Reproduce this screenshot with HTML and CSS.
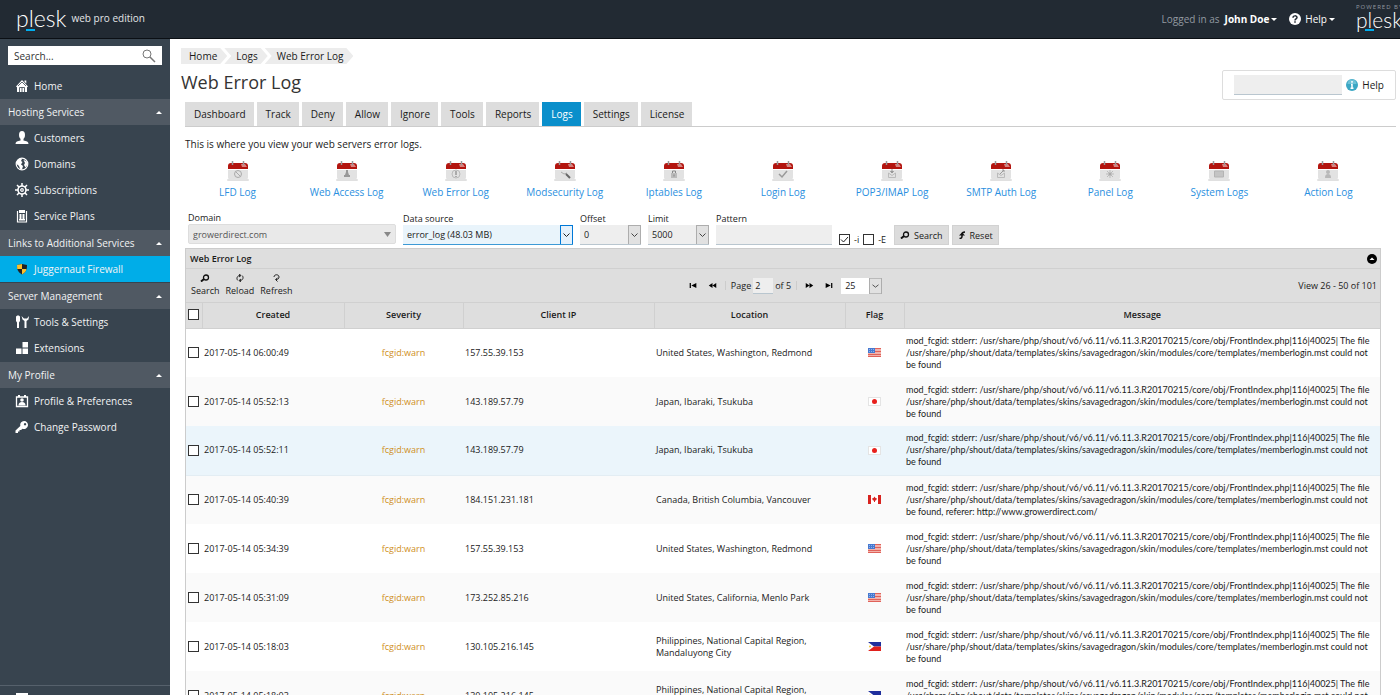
FILE: index.html
```html
<!DOCTYPE html>
<html lang="en">
<head>
    <meta charset="UTF-8">
    <meta name="viewport" content="width=device-width, initial-scale=1.0">
    <title>Web Error Log</title>
    <link rel="stylesheet" href="styles.css">
</head>
<body>

<!-- Shared icons -->
<svg class="sprite" aria-hidden="true">
    <symbol id="calendar" viewBox="0 0 22 20">
        <rect x="0" y="18" width="22" height="2" rx="1" fill="#ccc" opacity=".6"/>
        <path d="M1 7h20v9a3 3 0 0 1-3 3H4a3 3 0 0 1-3-3z" fill="#e2e2e2"/>
        <path d="M1 8V5a3 3 0 0 1 3-3h14a3 3 0 0 1 3 3v3z" fill="#b3150f"/>
        <path d="M14 3h4l2 3h-5z" fill="#d9837f"/>
        <path d="M5.500 0v4M16.500 0v4" stroke="#999" stroke-width="1.500"/>
        <path d="M1 8.500h20" stroke="#fff"/>
    </symbol>
    <symbol id="glass" viewBox="0 0 10 8">
        <circle cx="6" cy="3.500" r="2.500" fill="none" stroke="#111" stroke-width="1.300"/>
        <path d="M4 5L1 7.500" stroke="#111" stroke-width="2"/>
    </symbol>
    <symbol id="flag-us" viewBox="0 0 13 9">
        <rect width="13" height="9" fill="#f3b3ac"/>
        <path d="M0 .5h13M0 3.500h13M0 6.500h13M0 8.500h13" stroke="#e0625a"/>
        <rect width="7" height="5" fill="#4779d0"/>
        <path d="M1 1.500h5M1 3.500h5" stroke="#8fb1ea" stroke-dasharray="1 1"/>
    </symbol>
    <symbol id="flag-jp" viewBox="0 0 13 9">
        <rect x=".5" y=".5" width="12" height="8" fill="#fff" stroke="#e4e4e4"/>
        <circle cx="6.500" cy="4.500" r="2.500" fill="#e8201c"/>
    </symbol>
    <symbol id="flag-ca" viewBox="0 0 13 9">
        <rect width="13" height="9" fill="#fff"/>
        <path d="M0 0h3v9H0zM10 0h3v9h-3z" fill="#d8231f"/>
        <path d="M6.500 1.500l1 1.500 1.500.5-1 2H7v1.500H6V5.500H5l-1-2L5.500 3z" fill="#d8231f"/>
    </symbol>
    <symbol id="flag-ph" viewBox="0 0 13 9">
        <path d="M0 0h13v4.500H0z" fill="#1f2f9c"/>
        <path d="M0 4.500h13V9H0z" fill="#e0201c"/>
        <path d="M0 0l6 4.500L0 9z" fill="#fff"/>
        <circle cx="2" cy="4.500" r="1" fill="#f2c53a"/>
    </symbol>
</svg>

<header class="topbar">
    <a class="logo" href="#">p<span class="logo-l">l</span>esk</a>
    <span class="edition">web pro edition</span>
    <div class="topbar-right">
        <span class="logged">Logged in as</span>
        <a class="user" href="#">John Doe<i class="caret"></i></a>
        <a class="help" href="#">
            <svg width="12" height="12" viewBox="0 0 12 12"><circle cx="6" cy="6" r="6" fill="#fff"/><path d="M4 4.700C4 2.300 8 2.300 8 4.500 8 6 6 5.800 6 7.400M6 8.300v1.500" fill="none" stroke="#222a33" stroke-width="1.500"/></svg>
            Help<i class="caret"></i>
        </a>
        <div class="powered">
            <small>POWERED BY</small>
            <a class="logo" href="#">p<span class="logo-l">l</span>esk</a>
        </div>
    </div>
</header>

<div class="page">
    <aside class="sidebar">
        <form class="side-search">
            <input type="text" aria-label="Search" value="Search...">
            <svg width="14" height="14" viewBox="0 0 14 14" fill="none" stroke="#777"><circle cx="5" cy="5" r="4"/><path d="M8 8l5 5" stroke-width="1.500"/></svg>
        </form>
        <nav>
            <ul>
                <li><a href="#"><svg class="ico" viewBox="0 0 14 14"><path d="M7 1l6 6.500-1 .8V13H2V8.300l-1-.8zM9.500 1.500h1.800v3L9.500 2.800z"/><path d="M4.500 13V8.500h5V13M7 8.500V13M3 7l4-4 4 4" fill="none" stroke="#38444f" stroke-width=".8"/></svg>Home</a></li>
            </ul>
            <h2>Hosting Services<i class="up"></i></h2>
            <ul>
                <li><a href="#"><svg class="ico" viewBox="0 0 14 14"><ellipse cx="7" cy="4" rx="3" ry="4"/><path d="M5.500 6h3v3.500c3 .5 5 1 5 3.500H.5c0-2.500 2-3 5-3.500z"/></svg>Customers</a></li>
                <li><a href="#"><svg class="ico" viewBox="0 0 14 14"><circle cx="7" cy="7" r="5.800" fill="none" stroke="#fff" stroke-width="1.200"/><path d="M2 4c1.500-2 3-2.500 5-2l-1 2 1.500 1L6 7.500 8 9l-1 3.500C4 12 5 10 3.500 8.500L1.500 7zM8.500 3l3 1 1 3.500-2 3L9 8l1-2z"/></svg>Domains</a></li>
                <li><a href="#"><svg class="ico" viewBox="0 0 14 14"><g fill="none" stroke="#fff"><circle cx="7" cy="7" r="4" stroke-width="1.600"/><circle cx="7" cy="7" r="1.300" stroke-width="1.200"/><path d="M7 0v3M7 11v3M0 7h3M11 7h3M2 2l2.200 2.200M9.800 9.800L12 12M12 2L9.800 4.200M4.200 9.800L2 12" stroke-width="1.500"/></g></svg>Subscriptions</a></li>
                <li><a href="#"><svg class="ico" viewBox="0 0 14 14"><path d="M2.500 2v11h9V2" fill="none" stroke="#fff" stroke-width="1.200"/><path d="M4 1h6v3H4zM4.500 5h2v6h-2zM7.500 5h2v6h-2zM4 10h6v1.500H4z"/></svg>Service Plans</a></li>
            </ul>
            <h2>Links to Additional Services<i class="up"></i></h2>
            <ul>
                <li><a class="active" href="#"><svg class="ico" viewBox="0 0 14 14"><path d="M7 2l5 1c0 5-1 7-5 9.500C3 10 2 8 2 3z" fill="#222"/><path d="M7 2v5H2.200L2 3zM7 7h4.500c-.5 2.500-2 4-4.500 5.500z" fill="#fbc02d"/></svg>Juggernaut Firewall</a></li>
            </ul>
            <h2>Server Management<i class="up"></i></h2>
            <ul>
                <li><a href="#"><svg class="ico" viewBox="0 0 14 14"><path d="M1 2c0-2 4-2 4 0v4L4 7.500V13H2V7.500L1 6zM6.500 1l1 3.500L9.500 6v7h2V6l2-1.500.5-3.500-2 2.500H9z"/></svg>Tools &amp; Settings</a></li>
                <li><a href="#"><svg class="ico" viewBox="0 0 14 14"><path d="M7.500 1H13v5.500H7.500zM7.500 7.500H13V13H7.500zM1 7.500h5.500V13H1z"/></svg>Extensions</a></li>
            </ul>
            <h2>My Profile<i class="up"></i></h2>
            <ul>
                <li><a href="#"><svg class="ico" viewBox="0 0 14 14"><path d="M1.500 3h11v9.500h-11z" fill="none" stroke="#fff" stroke-width="1.300"/><path d="M3 1h2v2H3zM9 1h2v2H9z"/><circle cx="7" cy="6" r="1.800"/><path d="M3.500 11.500c0-2 1-3.500 3.500-3.500s3.500 1.500 3.500 3.500z"/></svg>Profile &amp; Preferences</a></li>
                <li><a href="#"><svg class="ico" viewBox="0 0 14 14"><path fill-rule="evenodd" d="M9 1a4 4 0 1 1-1.500 7.700L6 10H4.500v1.500H3V13H.5v-2.500L5.300 6A4 4 0 0 1 9 1zm1 2a1.200 1.200 0 1 0 .1 0z"/></svg>Change Password</a></li>
            </ul>
        </nav>
        <div class="side-foot">
            <svg class="ico" viewBox="0 0 14 14"><path d="M1 0h12v14H1z"/></svg>
        </div>
    </aside>

    <main class="content">
        <div class="page-head">
            <div>
                <nav class="crumbs">
                    <a href="#">Home</a>
                    <a href="#">Logs</a>
                    <a href="#">Web Error Log</a>
                </nav>
                <h1>Web Error Log</h1>
            </div>
            <div class="help-box">
                <input type="text" aria-label="Help search">
                <svg width="12" height="12" viewBox="0 0 12 12"><circle cx="6" cy="6" r="6" fill="#3ba7c4"/><path d="M1.500 5a4.500 4.500 0 0 1 9 0z" fill="#6fc2d7"/><path d="M6 2v1.700M5 5.500h1v3.500M4.500 9.300h3" fill="none" stroke="#fff" stroke-width="1.500"/></svg>
                <a href="#">Help</a>
            </div>
        </div>

        <nav class="tabs">
            <a href="#">Dashboard</a>
            <a href="#">Track</a>
            <a href="#">Deny</a>
            <a href="#">Allow</a>
            <a href="#">Ignore</a>
            <a href="#">Tools</a>
            <a href="#">Reports</a>
            <a class="current" href="#">Logs</a>
            <a href="#">Settings</a>
            <a href="#">License</a>
        </nav>

        <p class="intro">This is where you view your web servers error logs.</p>

        <div class="log-links">
            <a href="#"><svg class="cal" viewBox="0 0 22 20"><use href="#calendar"/><g fill="none" stroke="#aaa"><circle cx="11" cy="13" r="3.500"/><path d="M8.500 10.500l5 5"/></g></svg>LFD Log</a>
            <a href="#"><svg class="cal" viewBox="0 0 22 20"><use href="#calendar"/><path d="M10 9h2v2l1 3h1v2H8v-2h1l1-3z" fill="#999"/></svg>Web Access Log</a>
            <a href="#"><svg class="cal" viewBox="0 0 22 20"><use href="#calendar"/><circle cx="11" cy="13" r="4" fill="none" stroke="#bbb"/><path d="M11 10v4M11 15v1" stroke="#999" stroke-width="1.500"/></svg>Web Error Log</a>
            <a href="#"><svg class="cal" viewBox="0 0 22 20"><use href="#calendar"/><path d="M7 11l3 2 3-1" fill="none" stroke="#aaa"/><path d="M12 13l4 4" stroke="#666" stroke-width="2"/></svg>Modsecurity Log</a>
            <a href="#"><svg class="cal" viewBox="0 0 22 20"><use href="#calendar"/><path d="M8 12h6v5H8z" fill="#bbb"/><path d="M9.500 12v-2h3v2M11 13.500v2" fill="none" stroke="#888"/></svg>Iptables Log</a>
            <a href="#"><svg class="cal" viewBox="0 0 22 20"><use href="#calendar"/><path d="M7 13l3 3 5-6" fill="none" stroke="#999" stroke-width="1.500"/></svg>Login Log</a>
            <a href="#"><svg class="cal" viewBox="0 0 22 20"><use href="#calendar"/><path d="M7.500 12v4.500h7V12l-3.500 2.500z" fill="none" stroke="#bbb"/><path d="M11 8v3M9.500 10.500h3L11 12z" stroke="#999" fill="#999"/></svg>POP3/IMAP Log</a>
            <a href="#"><svg class="cal" viewBox="0 0 22 20"><use href="#calendar"/><path d="M7.500 12v4.500h7V12l-3.500 2.500z" fill="none" stroke="#bbb"/><path d="M10 13l4-4M12 9h2v2" fill="none" stroke="#999"/></svg>SMTP Auth Log</a>
            <a href="#"><svg class="cal" viewBox="0 0 22 20"><use href="#calendar"/><path d="M11 9v8M7 13h8M8 10l6 6M14 10l-6 6" stroke="#bbb"/><circle cx="11" cy="13" r="1.500" fill="#aaa"/></svg>Panel Log</a>
            <a href="#"><svg class="cal" viewBox="0 0 22 20"><use href="#calendar"/><path d="M6.500 10h9v6h-9z" fill="#c4c4c4" stroke="#b4b4b4"/></svg>System Logs</a>
            <a href="#"><svg class="cal" viewBox="0 0 22 20"><use href="#calendar"/><circle cx="11" cy="11" r="2" fill="#b8b8b8"/><path d="M8 17c0-3 1-4 3-4s3 1 3 4z" fill="#b8b8b8"/></svg>Action Log</a>
        </div>

        <form class="filters">
            <div class="field domain">
                <label for="domain">Domain</label>
                <select id="domain"><option>growerdirect.com</option></select>
            </div>
            <div class="field source">
                <label for="source">Data source</label>
                <select id="source" class="boxed"><option>error_log (48.03 MB)</option></select>
            </div>
            <div class="field small">
                <label for="offset">Offset</label>
                <select id="offset" class="boxed"><option>0</option></select>
            </div>
            <div class="field small">
                <label for="limit">Limit</label>
                <select id="limit" class="boxed"><option>5000</option></select>
            </div>
            <div class="field pattern">
                <label for="pattern">Pattern</label>
                <input type="text" id="pattern">
            </div>
            <div class="flags">
                <input type="checkbox" id="flag-i" checked><label for="flag-i">-i</label>
                <input type="checkbox" id="flag-e"><label for="flag-e">-E</label>
            </div>
            <div class="actions">
                <button type="button"><svg width="10" height="8"><use href="#glass"/></svg>Search</button>
                <button type="button"><svg width="8" height="8" viewBox="0 0 8 8"><path d="M7 1C4.500 1 4 2 4 3.500v2C4 7 3 7.500 1.500 7.500" fill="none" stroke="#111" stroke-width="1.500"/><path d="M1 4.500L4 1.500l3 3z" fill="#111"/></svg>Reset</button>
            </div>
        </form>

        <section class="grid">
            <div class="grid-title">
                Web Error Log
                <svg width="10" height="10" viewBox="0 0 10 10"><circle cx="5" cy="5" r="5" fill="#000"/><path d="M2.500 6L5 3.500 7.500 6z" fill="#fff"/></svg>
            </div>
            <div class="grid-tools">
                <div class="tools-left">
                    <button type="button"><svg width="10" height="8"><use href="#glass"/></svg>Search</button>
                    <button type="button"><svg width="10" height="8" viewBox="0 0 10 8" fill="none" stroke="#222"><path d="M3 6.500C1 5 2 1.500 5 1.500M7 1.500C9 3 8 6.500 5 6.500"/><path d="M4 0l2 1.500L4 3M6 5L4 6.500 6 8"/></svg>Reload</button>
                    <button type="button"><svg width="10" height="8" viewBox="0 0 10 8" fill="none" stroke="#222"><path d="M3 3c0-3 5-3 5 0 0 1.500-1 2.500-3 2.500M6.500 4L4.500 5.500l2 2"/></svg>Refresh</button>
                </div>
                <div class="pager">
                    <button type="button" aria-label="First page"><svg width="8" height="5" viewBox="0 0 8 6"><path d="M0 0h1.500v6H0zM8 0v6L2 3z"/></svg></button>
                    <button type="button" aria-label="Previous page"><svg width="9" height="5" viewBox="0 0 9 6"><path d="M4.500 0v6L0 3zM9 0v6L4.500 3z"/></svg></button>
                    <i class="sep"></i>
                    <label for="pageno">Page</label>
                    <input type="text" id="pageno" value="2">
                    <span>of 5</span>
                    <i class="sep"></i>
                    <button type="button" aria-label="Next page"><svg width="9" height="5" viewBox="0 0 9 6"><path d="M0 0v6l4.500-3zM4.500 0v6L9 3z"/></svg></button>
                    <button type="button" aria-label="Last page"><svg width="8" height="5" viewBox="0 0 8 6"><path d="M6.500 0H8v6H6.500zM0 0v6l6-3z"/></svg></button>
                    <select class="boxed" aria-label="Rows per page"><option>25</option></select>
                </div>
                <div class="view">View 26 - 50 of 101</div>
            </div>
            <table>
                <colgroup>
                    <col class="c-check"><col class="c-created"><col class="c-severity"><col class="c-ip"><col class="c-location"><col class="c-flag"><col>
                </colgroup>
                <thead>
                <tr>
                    <th><input type="checkbox" aria-label="Select all"></th>
                    <th>Created</th>
                    <th>Severity</th>
                    <th>Client IP</th>
                    <th>Location</th>
                    <th>Flag</th>
                    <th>Message</th>
                </tr>
                </thead>
                <tbody>
                <tr>
                    <td><input type="checkbox" aria-label="Select row"></td>
                    <td>2017-05-14 06:00:49</td>
                    <td class="warn">fcgid:warn</td>
                    <td>157.55.39.153</td>
                    <td>United States, Washington, Redmond</td>
                    <td class="flag"><svg><use href="#flag-us"/></svg></td>
                    <td class="msg">mod_fcgid: stderr: /usr/share/php/shout/v6/v6.11/v6.11.3.R20170215/core/obj/FrontIndex.php|116|40025| The file /usr/share/php/shout/data/templates/skins/savagedragon/skin/modules/core/templates/memberlogin.mst could not be found</td>
                </tr>
                <tr>
                    <td><input type="checkbox" aria-label="Select row"></td>
                    <td>2017-05-14 05:52:13</td>
                    <td class="warn">fcgid:warn</td>
                    <td>143.189.57.79</td>
                    <td>Japan, Ibaraki, Tsukuba</td>
                    <td class="flag"><svg><use href="#flag-jp"/></svg></td>
                    <td class="msg">mod_fcgid: stderr: /usr/share/php/shout/v6/v6.11/v6.11.3.R20170215/core/obj/FrontIndex.php|116|40025| The file /usr/share/php/shout/data/templates/skins/savagedragon/skin/modules/core/templates/memberlogin.mst could not be found</td>
                </tr>
                <tr class="hover">
                    <td><input type="checkbox" aria-label="Select row"></td>
                    <td>2017-05-14 05:52:11</td>
                    <td class="warn">fcgid:warn</td>
                    <td>143.189.57.79</td>
                    <td>Japan, Ibaraki, Tsukuba</td>
                    <td class="flag"><svg><use href="#flag-jp"/></svg></td>
                    <td class="msg">mod_fcgid: stderr: /usr/share/php/shout/v6/v6.11/v6.11.3.R20170215/core/obj/FrontIndex.php|116|40025| The file /usr/share/php/shout/data/templates/skins/savagedragon/skin/modules/core/templates/memberlogin.mst could not be found</td>
                </tr>
                <tr>
                    <td><input type="checkbox" aria-label="Select row"></td>
                    <td>2017-05-14 05:40:39</td>
                    <td class="warn">fcgid:warn</td>
                    <td>184.151.231.181</td>
                    <td>Canada, British Columbia, Vancouver</td>
                    <td class="flag"><svg><use href="#flag-ca"/></svg></td>
                    <td class="msg">mod_fcgid: stderr: /usr/share/php/shout/v6/v6.11/v6.11.3.R20170215/core/obj/FrontIndex.php|116|40025| The file /usr/share/php/shout/data/templates/skins/savagedragon/skin/modules/core/templates/memberlogin.mst could not be found, referer: http://www.growerdirect.com/</td>
                </tr>
                <tr>
                    <td><input type="checkbox" aria-label="Select row"></td>
                    <td>2017-05-14 05:34:39</td>
                    <td class="warn">fcgid:warn</td>
                    <td>157.55.39.153</td>
                    <td>United States, Washington, Redmond</td>
                    <td class="flag"><svg><use href="#flag-us"/></svg></td>
                    <td class="msg">mod_fcgid: stderr: /usr/share/php/shout/v6/v6.11/v6.11.3.R20170215/core/obj/FrontIndex.php|116|40025| The file /usr/share/php/shout/data/templates/skins/savagedragon/skin/modules/core/templates/memberlogin.mst could not be found</td>
                </tr>
                <tr>
                    <td><input type="checkbox" aria-label="Select row"></td>
                    <td>2017-05-14 05:31:09</td>
                    <td class="warn">fcgid:warn</td>
                    <td>173.252.85.216</td>
                    <td>United States, California, Menlo Park</td>
                    <td class="flag"><svg><use href="#flag-us"/></svg></td>
                    <td class="msg">mod_fcgid: stderr: /usr/share/php/shout/v6/v6.11/v6.11.3.R20170215/core/obj/FrontIndex.php|116|40025| The file /usr/share/php/shout/data/templates/skins/savagedragon/skin/modules/core/templates/memberlogin.mst could not be found</td>
                </tr>
                <tr>
                    <td><input type="checkbox" aria-label="Select row"></td>
                    <td>2017-05-14 05:18:03</td>
                    <td class="warn">fcgid:warn</td>
                    <td>130.105.216.145</td>
                    <td>Philippines, National Capital Region, Mandaluyong City</td>
                    <td class="flag"><svg><use href="#flag-ph"/></svg></td>
                    <td class="msg">mod_fcgid: stderr: /usr/share/php/shout/v6/v6.11/v6.11.3.R20170215/core/obj/FrontIndex.php|116|40025| The file /usr/share/php/shout/data/templates/skins/savagedragon/skin/modules/core/templates/memberlogin.mst could not be found</td>
                </tr>
                <tr>
                    <td><input type="checkbox" aria-label="Select row"></td>
                    <td>2017-05-14 05:18:03</td>
                    <td class="warn">fcgid:warn</td>
                    <td>130.105.216.145</td>
                    <td>Philippines, National Capital Region, Mandaluyong City</td>
                    <td class="flag"><svg><use href="#flag-ph"/></svg></td>
                    <td class="msg">mod_fcgid: stderr: /usr/share/php/shout/v6/v6.11/v6.11.3.R20170215/core/obj/FrontIndex.php|116|40025| The file /usr/share/php/shout/data/templates/skins/savagedragon/skin/modules/core/templates/memberlogin.mst could not be found</td>
                </tr>
                </tbody>
            </table>
        </section>
    </main>
</div>

</body>
</html>
```
FILE: styles.css
```css
* {
    box-sizing: border-box;
}

body {
    margin: 0;
    height: 100vh;
    display: flex;
    flex-direction: column;
    overflow: hidden;
    font-family: "Open Sans", "Noto Sans", sans-serif;
    font-size: 10px;
    color: #1a1a1a;
    background: #fff;
}

a {
    color: inherit;
    text-decoration: none;
}

input, select, button {
    font-family: inherit;
    font-size: inherit;
    color: inherit;
    border: none;
    border-radius: 0;
    margin: 0;
    padding: 0;
    background: none;
}

select {
    appearance: none;
}

svg {
    flex: none;
}

.sprite {
    display: none;
}

/* Top bar */
.topbar {
    flex: none;
    display: flex;
    align-items: center;
    height: 39px;
    padding: 0 0 0 16px;
    background: #222a33;
    border-bottom: 1px solid #0b0f14;
    color: #fff;
}

.logo {
    padding-bottom: 2px;
    font-family: Lato, sans-serif;
    font-weight: 300;
    font-size: 23px;
    line-height: 26px;
    color: #fff;
}

.logo-l {
    position: relative;
}

.logo-l::after {
    content: "";
    position: absolute;
    left: -3px;
    bottom: 1px;
    width: 9px;
    height: 2px;
    background: #00aeef;
}

.edition {
    margin-left: 5px;
    padding-bottom: 2px;
    color: #e3e5e7;
}

.topbar-right {
    display: flex;
    align-items: center;
    margin-left: auto;
}

.logged {
    color: #9299a1;
    margin-right: 5px;
}

.user {
    font-weight: bold;
    margin-right: 12px;
}

.help {
    display: flex;
    align-items: center;
    gap: 4px;
    margin-right: 21px;
}

.caret {
    display: inline-block;
    vertical-align: 2px;
    margin-left: 2px;
    border: 3px solid transparent;
    border-top-color: #fff;
    border-bottom: none;
}

.help .caret {
    margin-left: -2px;
}

.powered {
    width: 44px;
    padding-bottom: 4px;
    white-space: nowrap;
}

.powered small {
    display: block;
    font-size: 6px;
    line-height: 6px;
    letter-spacing: 1px;
    color: #9299a1;
}

.powered .logo {
    display: block;
    padding: 0;
    font-size: 21px;
    line-height: 20px;
}

/* Sidebar */
.page {
    flex: 1;
    min-height: 0;
    display: flex;
}

.sidebar {
    flex: none;
    width: 170px;
    display: flex;
    flex-direction: column;
    background: #38444f;
    color: #f2f3f4;
}

.side-search {
    display: flex;
    align-items: center;
    height: 19px;
    margin: 7px 8px 8px;
    padding: 0 6px;
    background: #fff;
    color: #333;
}

.side-search input {
    flex: 1;
    min-width: 0;
}

.sidebar ul {
    list-style: none;
    margin: 0;
    padding: 0 0 1px;
}

.sidebar nav ul:first-child {
    padding: 0;
}

.sidebar li a {
    display: flex;
    align-items: center;
    gap: 5px;
    height: 26px;
    padding-left: 15px;
}

.sidebar li a.active {
    background: #00ade8;
}

.sidebar h2 {
    display: flex;
    align-items: center;
    justify-content: space-between;
    height: 26px;
    margin: 0;
    padding: 0 8px;
    font-size: 10px;
    font-weight: normal;
    background: #505963;
}

.up {
    border: 3px solid transparent;
    border-bottom-color: #fff;
    border-top: none;
}

.ico {
    width: 14px;
    height: 14px;
    fill: #fff;
}

.side-foot {
    height: 10px;
    margin-top: auto;
    padding: 7px 15px 0;
    border-top: 1px solid #56616c;
    overflow: hidden;
}

/* Page heading */
.content {
    flex: 1;
    min-width: 0;
    padding: 9px 4px 0 11px;
}

.page-head {
    display: flex;
    justify-content: space-between;
    height: 54px;
}

.crumbs {
    display: flex;
    gap: 2px;
}

.crumbs a {
    height: 16px;
    line-height: 16px;
    padding: 0 10px 0 12px;
    background: #ececec;
    clip-path: polygon(0 0, calc(100% - 7px) 0, 100% 50%, calc(100% - 7px) 100%, 0 100%, 7px 50%);
    margin-right: -5px;
}

.crumbs a:first-child {
    padding-left: 8px;
    clip-path: polygon(0 0, calc(100% - 7px) 0, 100% 50%, calc(100% - 7px) 100%, 0 100%);
}

h1 {
    margin: 5px 0 0;
    font-size: 18px;
    line-height: 26px;
    font-weight: normal;
    color: #333;
}

.help-box {
    display: flex;
    align-items: center;
    gap: 4px;
    height: 30px;
    margin-top: 22px;
    padding: 0 11px;
    border: 1px solid #ddd;
    border-radius: 2px;
}

.help-box input {
    width: 108px;
    height: 20px;
    background: #eee;
    border-bottom: 1px solid #b9c6cf;
}

/* Tabs */
.tabs {
    display: flex;
    gap: 3px;
    margin-left: 4px;
    border-bottom: 1px solid #ccc;
}

.tabs a {
    height: 24px;
    line-height: 24px;
    padding: 0 8px 0 9px;
    background: #ddd;
}

.tabs a.current {
    background: #0a8fcb;
    color: #fff;
}

.intro {
    margin: 10px 4px 0;
    line-height: 14px;
}

/* Log shortcuts */
.log-links {
    display: grid;
    grid-template-columns: repeat(11, 1fr);
    margin: 10px 13px 0 2px;
}

.log-links a {
    display: flex;
    flex-direction: column;
    align-items: center;
    gap: 4px;
    line-height: 14px;
    color: #2a8fe0;
}

.cal {
    width: 22px;
    height: 20px;
}

/* Filters */
.filters {
    display: flex;
    align-items: flex-end;
    margin: 13px 0 0 7px;
    font-size: 9px;
}

.field {
    display: flex;
    flex-direction: column;
    margin-right: 7px;
}

.field label {
    line-height: 12px;
}

.field select, .field input {
    height: 20px;
    padding-left: 4px;
    background-color: #eee;
    border-bottom: 1px solid #b9c6cf;
}

.domain {
    width: 208px;
    padding-bottom: 1px;
}

.domain select {
    background: #e9e9e9 url("data:image/svg+xml,%3Csvg xmlns='http://www.w3.org/2000/svg' width='7' height='5'%3E%3Cpath d='M0 0h7L3.500 5z' fill='%23888'/%3E%3C/svg%3E") no-repeat right 4px center;
    border: 1px solid #ddd;
    border-radius: 2px;
    color: #555;
}

.source {
    width: 170px;
}

.small {
    width: 61px;
}

.pattern {
    width: 116px;
}

.filters .boxed, .pager .boxed {
    background-image: url("data:image/svg+xml,%3Csvg xmlns='http://www.w3.org/2000/svg' width='13' height='20' viewBox='0 0 13 20' preserveAspectRatio='none'%3E%3Crect x='.5' y='.5' width='12' height='19' fill='%23e1e1e1' stroke='%23adadad'/%3E%3Cpath d='M3.500 8.500l3 3 3-3' fill='none' stroke='%23444'/%3E%3C/svg%3E");
    background-repeat: no-repeat;
    background-position: right center;
    background-size: 13px 100%;
    background-origin: border-box;
}

.filters .source .boxed {
    background-color: #e9f4fb;
    background-image: url("data:image/svg+xml,%3Csvg xmlns='http://www.w3.org/2000/svg' width='13' height='20' viewBox='0 0 13 20' preserveAspectRatio='none'%3E%3Crect x='.5' y='.5' width='12' height='19' fill='%23e5f1fb' stroke='%230078d7'/%3E%3Cpath d='M3.500 8.500l3 3 3-3' fill='none' stroke='%23222'/%3E%3C/svg%3E");
    border-bottom-color: #3c9ad6;
}

input[type="checkbox"] {
    appearance: none;
    display: block;
    width: 11px;
    height: 11px;
    background: #fff;
    border: 1px solid #333;
}

input[type="checkbox"]:checked {
    background: #fff url("data:image/svg+xml,%3Csvg xmlns='http://www.w3.org/2000/svg' width='9' height='9'%3E%3Cpath d='M1 4.500l2.500 2.500L8 2' fill='none' stroke='%23222'/%3E%3C/svg%3E") no-repeat center;
}

.flags {
    display: flex;
    align-items: center;
    gap: 4px;
    width: 55px;
    line-height: 11px;
}

.actions {
    display: flex;
    gap: 3px;
}

.actions button {
    display: flex;
    align-items: center;
    gap: 4px;
    height: 20px;
    padding: 0 5px;
    background: #dcdcdc;
    border: 1px solid #d2d2d2;
}

/* Grid */
.grid {
    margin: 3px 15px 0 4px;
    border: 1px solid #ccc;
    font-size: 9px;
}

.grid-title {
    display: flex;
    align-items: center;
    justify-content: space-between;
    height: 20px;
    padding: 0 3px 0 4px;
    font-weight: 600;
    background: #dedede;
    border-bottom: 1px solid #d0d0d0;
}

.grid-tools {
    display: grid;
    grid-template-columns: 1fr auto 1fr;
    align-items: center;
    height: 34px;
    padding: 0 3px 0 5px;
    background: #dedede;
    border-bottom: 1px solid #d0d0d0;
}

.tools-left {
    display: flex;
    gap: 6px;
}

.tools-left button {
    display: flex;
    flex-direction: column;
    align-items: center;
    gap: 3px;
    line-height: 12px;
}

.pager {
    display: flex;
    align-items: center;
    gap: 5px;
}

.pager button {
    display: flex;
    padding: 0 3px;
}

.sep {
    width: 1px;
    height: 9px;
    background: #ccc;
}

.pager input {
    width: 20px;
    height: 16px;
    margin: 0 -3px;
    padding-left: 2px;
    background: #eee;
    border-bottom: 1px solid #b9c6cf;
}

.pager select {
    width: 41px;
    height: 16px;
    padding-left: 4px;
    background-color: #fff;
}

.view {
    text-align: right;
}

.grid table {
    width: 100%;
    table-layout: fixed;
    border-collapse: collapse;
    line-height: 12px;
}

.c-check { width: 16px; }
.c-created { width: 142px; }
.c-severity { width: 119px; }
.c-ip { width: 191px; }
.c-location { width: 191px; }
.c-flag { width: 59px; }

th {
    height: 25px;
    padding: 0 2px 1px;
    font-weight: 600;
    background: #dedede;
    border-right: 1px solid #d0d0d0;
    border-bottom: 1px solid #d0d0d0;
}

th:last-child {
    border-right: none;
}

td {
    height: 49px;
    padding: 0 2px;
}

tbody tr:nth-child(even) {
    background: #fafafa;
}

tbody tr.hover {
    background: #ebf5fb;
    border-bottom: 1px solid #e3edf3;
}

.warn {
    text-align: center;
    color: #cf8f1c;
}

.msg {
    font-family: Lato, "Open Sans", sans-serif;
}

.flag svg {
    display: block;
    width: 13px;
    height: 9px;
    margin: 0 auto;
}
```
